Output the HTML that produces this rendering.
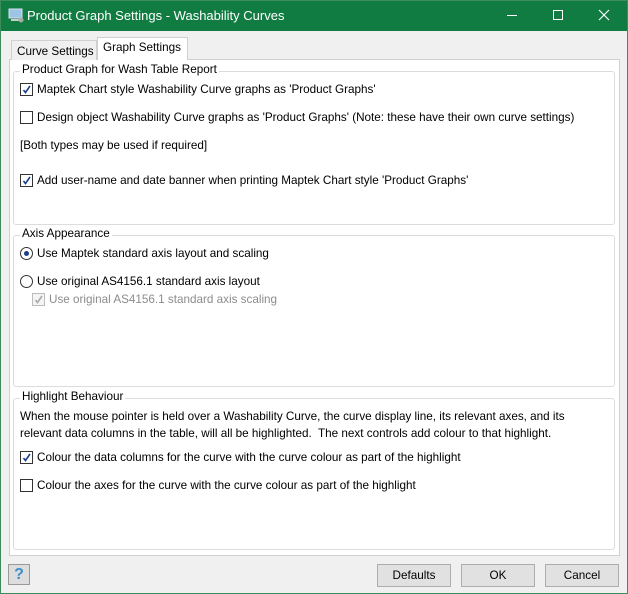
<!DOCTYPE html>
<html><head><meta charset="utf-8"><style>
*{margin:0;padding:0;box-sizing:border-box}
body{width:628px;height:594px;background:#f0f0f0;font-family:"Liberation Sans",sans-serif;font-size:11.7px;color:#000;position:relative;overflow:hidden}
.abs{position:absolute}
.frame{position:absolute;left:0;top:0;width:628px;height:594px;border:1px solid #3c8c5c;}
.title{position:absolute;left:0;top:0;width:628px;height:31px;background:#107c41;color:#fff;font-size:13px}
.title span{position:absolute;left:27px;top:8px}
.page{position:absolute;left:9px;top:59px;width:611px;height:497px;background:#fff;border:1px solid #d0d0d0}
.tab{position:absolute;white-space:nowrap;border:1px solid #d0d0d0;border-bottom:none;padding:4px 5px 0 5px;font-size:11.7px}
.grp{position:absolute;left:13px;width:602px;border:1px solid #dcdcdc;border-radius:3px}
.gl{position:absolute;left:6px;top:-9px;background:#fff;padding:0 2px;font-size:11.7px;white-space:nowrap}
.t{position:absolute;font-size:11.7px;white-space:nowrap}
.cb{position:absolute;width:13px;height:13px;border:1px solid #333;background:#fff}
.cb.dis{border-color:#bbb;background:#f4f4f4}
.cb svg{position:absolute;left:1px;top:1px}
.rb{position:absolute;width:13px;height:13px;border:1px solid #333;border-radius:50%;background:#fff}
.btn{position:absolute;top:564px;height:23px;background:#e1e1e1;border:1px solid #adadad;text-align:center;line-height:21px;font-size:11.7px}
</style></head><body>
<div class="title">
<svg class="abs" style="left:8px;top:8px" width="16" height="15"><rect x="1" y="1" width="13" height="9" fill="#9cc4e4" stroke="#dde"/><rect x="3" y="11" width="9" height="2" fill="#ccc"/><circle cx="13" cy="12" r="2.5" fill="#aaa"/></svg>
<span>Product Graph Settings - Washability Curves</span>
<div class="abs" style="left:507px;top:15px;width:10px;height:1px;background:#fff"></div>
<div class="abs" style="left:553px;top:10px;width:10px;height:10px;border:1px solid #fff"></div>
<svg class="abs" style="left:598px;top:9px" width="12" height="12"><path d="M1 1L11 11M11 1L1 11" stroke="#fff" stroke-width="1.2"/></svg>
</div>
<div class="frame"></div>
<div class="page"></div>
<div class="tab" style="left:11px;top:40px;width:86px;height:20px;background:#f0f0f0">Curve Settings</div>
<div class="tab" style="left:97px;top:37px;width:91px;height:23px;background:#fff;padding-top:3px">Graph Settings</div>

<div class="grp" style="top:71px;height:154px"><div class="gl">Product Graph for Wash Table Report</div></div>
<div class="cb" style="left:20px;top:83px"><svg width="9" height="9"><path d="M1.5 5L3.5 7.5L8 1" stroke="#1c3d8c" stroke-width="1.6" fill="none"/></svg></div>
<div class="t" style="left:37px;top:83px">Maptek Chart style Washability Curve graphs as 'Product Graphs'</div>
<div class="cb" style="left:20px;top:111px"></div>
<div class="t" style="left:37px;top:111px">Design object Washability Curve graphs as 'Product Graphs' (Note: these have their own curve settings)</div>
<div class="t" style="left:20px;top:139px">[Both types may be used if required]</div>
<div class="cb" style="left:20px;top:174px"><svg width="9" height="9"><path d="M1.5 5L3.5 7.5L8 1" stroke="#1c3d8c" stroke-width="1.6" fill="none"/></svg></div>
<div class="t" style="left:37px;top:174px">Add user-name and date banner when printing Maptek Chart style 'Product Graphs'</div>

<div class="grp" style="top:235px;height:152px"><div class="gl">Axis Appearance</div></div>
<div class="rb" style="left:20px;top:247px"></div><div class="abs" style="left:24px;top:251px;width:5px;height:5px;border-radius:50%;background:#1c3d8c"></div>
<div class="t" style="left:37px;top:247px">Use Maptek standard axis layout and scaling</div>
<div class="rb" style="left:20px;top:275px"></div>
<div class="t" style="left:37px;top:275px">Use original AS4156.1 standard axis layout</div>
<div class="cb dis" style="left:32px;top:293px"><svg width="9" height="9"><path d="M1.5 5L3.5 7.5L8 1" stroke="#aaa" stroke-width="1.6" fill="none"/></svg></div>
<div class="t" style="left:49px;top:293px;color:#8c8c8c">Use original AS4156.1 standard axis scaling</div>

<div class="grp" style="top:398px;height:152px"><div class="gl">Highlight Behaviour</div></div>
<div class="t" style="left:20px;top:410px">When the mouse pointer is held over a Washability Curve, the curve display line, its relevant axes, and its</div>
<div class="t" style="left:20px;top:427px">relevant data columns in the table, will all be highlighted.&nbsp; The next controls add colour to that highlight.</div>
<div class="cb" style="left:20px;top:451px"><svg width="9" height="9"><path d="M1.5 5L3.5 7.5L8 1" stroke="#1c3d8c" stroke-width="1.6" fill="none"/></svg></div>
<div class="t" style="left:37px;top:451px">Colour the data columns for the curve with the curve colour as part of the highlight</div>
<div class="cb" style="left:20px;top:479px"></div>
<div class="t" style="left:37px;top:479px">Colour the axes for the curve with the curve colour as part of the highlight</div>

<div class="abs" style="left:8px;top:564px;width:22px;height:21px;border:1px solid #999;background:#ddd;text-align:center;font-weight:bold;font-size:16px;line-height:19px;color:#3a8fc8">?</div>
<div class="btn" style="left:377px;width:74px">Defaults</div>
<div class="btn" style="left:461px;width:74px">OK</div>
<div class="btn" style="left:545px;width:74px">Cancel</div>
</body></html>
